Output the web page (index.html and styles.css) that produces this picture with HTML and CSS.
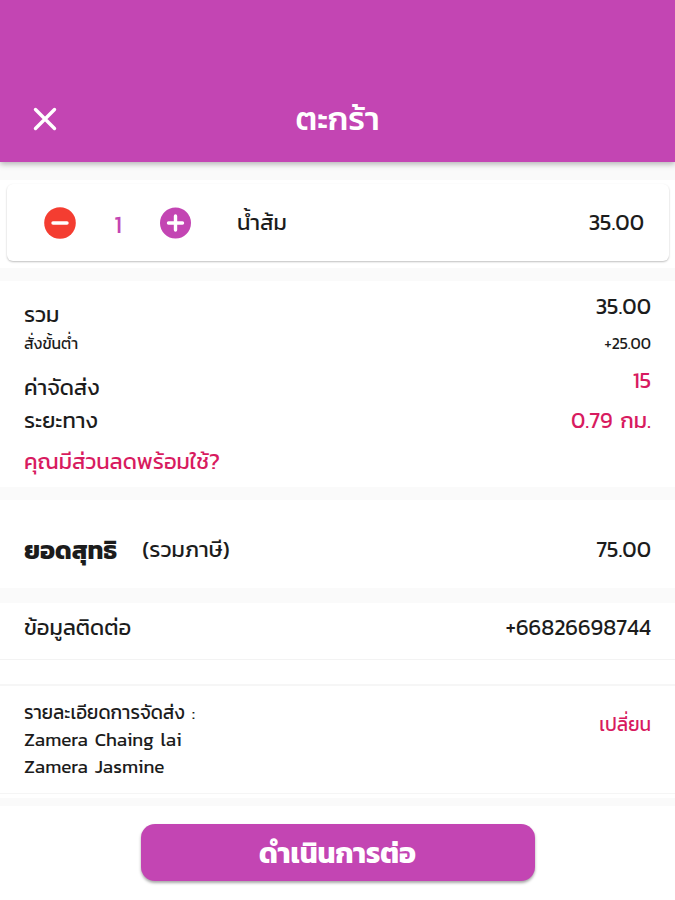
FILE: index.html
```
<!DOCTYPE html>
<html lang="th">
<head>
  <meta charset="UTF-8">
  <meta name="viewport" content="width=device-width, initial-scale=1.0">
  <title>ตะกร้า</title>
  <link rel="stylesheet" href="styles.css">
</head>
<body>

  <!-- Header -->
  <header class="header">
    <button class="close-button" aria-label="ปิด">
      <svg width="24" height="24" viewBox="0 0 24 24">
        <path d="M2.5 2.5L21.5 21.5M21.5 2.5L2.5 21.5" stroke="#fff" stroke-width="3.4" stroke-linecap="round"/>
      </svg>
    </button>
    <h1>ตะกร้า</h1>
  </header>

  <!-- Cart items -->
  <section class="items">
    <div class="card">
      <button class="round-button" aria-label="ลด">
        <svg width="32" height="32" viewBox="0 0 32 32">
          <circle cx="16" cy="16" r="15.8" fill="#f43d31"/>
          <path d="M9 16H23" stroke="#fff" stroke-width="3.4" stroke-linecap="round"/>
        </svg>
      </button>
      <span class="qty">1</span>
      <button class="round-button" aria-label="เพิ่ม">
        <svg width="32" height="32" viewBox="0 0 32 32">
          <circle cx="15.5" cy="16" r="15.5" fill="#c345b3"/>
          <path d="M8.5 16H22.5M15.5 9V23" stroke="#fff" stroke-width="3.4" stroke-linecap="round"/>
        </svg>
      </button>
      <span class="item-name">น้ำส้ม</span>
      <span class="item-price">35.00</span>
    </div>
  </section>

  <!-- Price summary -->
  <section class="summary">
    <div class="row row-sum"><span class="label">รวม</span><span>35.00</span></div>
    <div class="row row-min"><span class="label">สั่งขั้นต่ำ</span><span>+25.00</span></div>
    <div class="row row-fee"><span class="label">ค่าจัดส่ง</span><span class="pink">15</span></div>
    <div class="row row-distance"><span class="label">ระยะทาง</span><span class="pink">0.79 กม.</span></div>
    <div class="row row-coupon pink"><span>คุณมีส่วนลดพร้อมใช้?</span></div>
  </section>

  <!-- Total -->
  <section class="total">
    <strong>ยอดสุทธิ</strong>
    <span>(รวมภาษี)</span>
    <span class="value">75.00</span>
  </section>

  <!-- Contact -->
  <section class="contact">
    <span>ข้อมูลติดต่อ</span>
    <span>+66826698744</span>
  </section>

  <!-- Delivery details -->
  <section class="delivery">
    <div class="address">
      <p>รายละเอียดการจัดส่ง :</p>
      <p>Zamera Chaing lai</p>
      <p>Zamera Jasmine</p>
    </div>
    <a class="change pink">เปลี่ยน</a>
  </section>

  <footer class="footer">
    <button class="submit-button">ดำเนินการต่อ</button>
  </footer>

</body>
</html>
```
FILE: styles.css
```
* {
  margin: 0;
  padding: 0;
  box-sizing: border-box;
}

body {
  width: 675px;
  height: 900px;
  overflow: hidden;
  background-color: #fafafa;
  color: #1c1c1c;
  font-family: Kanit, Prompt, "Noto Sans Thai", "Noto Sans", sans-serif;
  font-size: 22px;
  font-weight: 400;
  word-spacing: 2.5px;
}

button {
  border: none;
  background: none;
  font-family: inherit;
  cursor: pointer;
}

svg {
  display: block;
  fill: none;
}

span, strong, a, p {
  white-space: nowrap;
}

.pink {
  color: #d81b60;
}

/* Header */
.header {
  position: relative;
  height: 162px;
  padding: 76px 33px 0;
  display: grid;
  grid-template-columns: 24px 1fr 24px;
  align-items: center;
  background-color: #c345b3;
  box-shadow: 0 2px 6px rgba(0, 0, 0, 0.3);
}

h1 {
  color: #fff;
  font-size: 33px;
  font-weight: 500;
  line-height: 40px;
  text-align: center;
}

/* Cart items */
.items {
  height: 88px;
  margin-top: 18px;
  padding: 4px 6px 0 7px;
  background-color: #fff;
}

.card {
  height: 77px;
  padding: 0 25px 0 37px;
  display: flex;
  align-items: center;
  background-color: #fff;
  border-radius: 6px;
  box-shadow: 0 1px 2px rgba(0, 0, 0, 0.25);
}

.qty {
  width: 84px;
  padding-top: 3px;
  color: #c345b3;
  font-size: 24px;
  text-align: center;
}

.item-name {
  margin-left: 45px;
}

.item-price {
  margin-left: auto;
}

/* Price summary */
.summary {
  height: 206px;
  margin-top: 13px;
  padding: 11px 24px 0;
  background-color: #fff;
}

.row {
  display: flex;
  justify-content: space-between;
  line-height: 30px;
}

.row-sum {
  height: 38px;
}

.row-sum .label {
  padding-top: 8px;
}

.row-min {
  height: 36px;
  line-height: 28px;
  font-size: 15.7px;
}

.row-fee {
  height: 40px;
}

.row-fee .label {
  padding-top: 7px;
}

.row-distance {
  height: 41px;
}

/* Total */
.total {
  height: 88px;
  margin-top: 13px;
  padding: 11px 24px 0;
  display: flex;
  align-items: center;
  background-color: #fff;
}

.total strong {
  margin-right: 25px;
  font-size: 25.2px;
  font-weight: 700;
}

.total .value {
  margin-left: auto;
}

/* Contact */
.contact {
  height: 57px;
  margin-top: 15px;
  padding: 10px 24px 0;
  display: flex;
  justify-content: space-between;
  line-height: 30px;
  background-color: #fff;
  border-bottom: 1px solid #f3f3f3;
}

/* Delivery details */
.delivery {
  height: 138px;
  padding: 39px 24px 0;
  display: flex;
  justify-content: space-between;
  background: linear-gradient(#fff 24px, #f6f6f6 24px, #f6f6f6 26px, #fff 26px, #fff 133px, #f5f5f5 133px, #f5f5f5 134px, #fff 134px);
}

.address {
  font-size: 18.9px;
  line-height: 27px;
}

.change {
  padding-top: 11px;
  font-size: 19px;
  line-height: 30px;
}

/* Footer */
.footer {
  height: 94px;
  margin-top: 8px;
  padding-top: 18px;
  text-align: center;
  background-color: #fff;
}

.submit-button {
  width: 394px;
  height: 57px;
  color: #fff;
  font-size: 28.3px;
  font-weight: 700;
  background-color: #c345b3;
  border-radius: 14px;
  box-shadow: 0 2px 3px rgba(0, 0, 0, 0.35);
}
```
